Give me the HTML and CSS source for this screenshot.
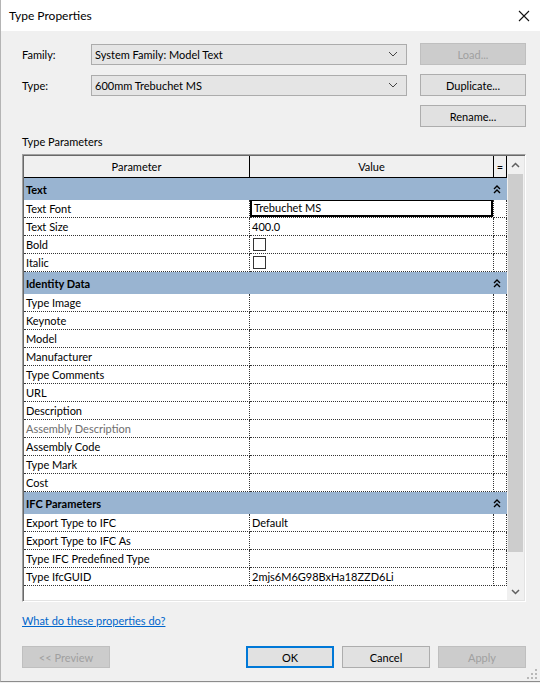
FILE: index.html
```html
<!DOCTYPE html>
<html lang="en">
<head>
    <meta charset="UTF-8">
    <title>Type Properties</title>
    <link rel="stylesheet" href="styles.css">
</head>
<body>
    <div class="dialog">
        <div class="titlebar">
            <span class="title">Type Properties</span>
            <svg class="close" width="12" height="12" viewBox="0 0 12 12">
                <path d="M1 1 L11 11 M11 1 L1 11" stroke="#111" stroke-width="1.1" fill="none"/>
            </svg>
        </div>

        <div class="content">
            <div class="type-form">
                <label>Family:</label>
                <div class="combo">
                    <span>System Family: Model Text</span>
                    <svg width="10" height="6" viewBox="0 0 10 6"><path d="M1 1 L5 5 L9 1" stroke="#444" stroke-width="1" fill="none"/></svg>
                </div>
                <button class="btn" disabled>Load...</button>

                <label>Type:</label>
                <div class="combo">
                    <span>600mm Trebuchet MS</span>
                    <svg width="10" height="6" viewBox="0 0 10 6"><path d="M1 1 L5 5 L9 1" stroke="#444" stroke-width="1" fill="none"/></svg>
                </div>
                <button class="btn">Duplicate...</button>

                <button class="btn rename">Rename...</button>
            </div>

            <div class="section-label">Type Parameters</div>

            <div class="prop-grid">
                <div class="prop-table">
                    <div class="head">
                        <div>Parameter</div>
                        <div>Value</div>
                        <div>=</div>
                    </div>

                    <div class="group">
                        <span>Text</span>
                        <svg class="fold" width="8" height="9" viewBox="0 0 8 9"><path d="M1 4 L4 1 L7 4 M1 8 L4 5 L7 8" stroke="#000" stroke-width="1.4" fill="none"/></svg>
                    </div>
                    <div class="row"><div>Text Font</div><div class="val"><span class="edit">Trebuchet MS</span></div><div></div></div>
                    <div class="row"><div>Text Size</div><div class="val">400.0</div><div></div></div>
                    <div class="row"><div>Bold</div><div class="val"><span class="check"></span></div><div></div></div>
                    <div class="row"><div>Italic</div><div class="val"><span class="check"></span></div><div></div></div>

                    <div class="group">
                        <span>Identity Data</span>
                        <svg class="fold" width="8" height="9" viewBox="0 0 8 9"><path d="M1 4 L4 1 L7 4 M1 8 L4 5 L7 8" stroke="#000" stroke-width="1.4" fill="none"/></svg>
                    </div>
                    <div class="row"><div>Type Image</div><div class="val"></div><div></div></div>
                    <div class="row"><div>Keynote</div><div class="val"></div><div></div></div>
                    <div class="row"><div>Model</div><div class="val"></div><div></div></div>
                    <div class="row"><div>Manufacturer</div><div class="val"></div><div></div></div>
                    <div class="row"><div>Type Comments</div><div class="val"></div><div></div></div>
                    <div class="row"><div>URL</div><div class="val"></div><div></div></div>
                    <div class="row"><div>Description</div><div class="val"></div><div></div></div>
                    <div class="row"><div class="muted">Assembly Description</div><div class="val"></div><div></div></div>
                    <div class="row"><div>Assembly Code</div><div class="val"></div><div></div></div>
                    <div class="row"><div>Type Mark</div><div class="val"></div><div></div></div>
                    <div class="row"><div>Cost</div><div class="val"></div><div></div></div>

                    <div class="group">
                        <span>IFC Parameters</span>
                        <svg class="fold" width="8" height="9" viewBox="0 0 8 9"><path d="M1 4 L4 1 L7 4 M1 8 L4 5 L7 8" stroke="#000" stroke-width="1.4" fill="none"/></svg>
                    </div>
                    <div class="row"><div>Export Type to IFC</div><div class="val">Default</div><div></div></div>
                    <div class="row"><div>Export Type to IFC As</div><div class="val"></div><div></div></div>
                    <div class="row"><div>Type IFC Predefined Type</div><div class="val"></div><div></div></div>
                    <div class="row"><div>Type IfcGUID</div><div class="val">2mjs6M6G98BxHa18ZZD6Li</div><div></div></div>
                </div>

                <div class="scrollbar">
                    <div class="arrow">
                        <svg width="9" height="6" viewBox="0 0 9 6"><path d="M1 5 L4.5 1.5 L8 5" stroke="#606060" stroke-width="1.5" fill="none"/></svg>
                    </div>
                    <div class="track"><div class="thumb"></div></div>
                    <div class="arrow">
                        <svg width="9" height="6" viewBox="0 0 9 6"><path d="M1 1 L4.5 4.5 L8 1" stroke="#606060" stroke-width="1.5" fill="none"/></svg>
                    </div>
                </div>
            </div>

            <a class="help" href="#">What do these properties do?</a>

            <div class="actions">
                <button class="btn" disabled>&lt;&lt; Preview</button>
                <div class="spacer"></div>
                <button class="btn default">OK</button>
                <button class="btn">Cancel</button>
                <button class="btn" disabled>Apply</button>
            </div>
        </div>

        <svg class="grip" width="12" height="12" viewBox="0 0 12 12">
            <rect x="9" y="1" width="2" height="2" fill="#b8b8b8"/>
            <rect x="9" y="5" width="2" height="2" fill="#b8b8b8"/>
            <rect x="5" y="5" width="2" height="2" fill="#b8b8b8"/>
            <rect x="9" y="9" width="2" height="2" fill="#b8b8b8"/>
            <rect x="5" y="9" width="2" height="2" fill="#b8b8b8"/>
            <rect x="1" y="9" width="2" height="2" fill="#b8b8b8"/>
        </svg>
    </div>
</body>
</html>
```

FILE: styles.css
```css
* {
    margin: 0;
    padding: 0;
    box-sizing: border-box;
}

body {
    font-family: Lato, 'Open Sans', sans-serif;
    font-size: 11px;
    color: #000;
    background: #f0f0f0;
    width: 540px;
    height: 683px;
    overflow: hidden;
}

.dialog {
    position: relative;
    width: 540px;
    height: 682px;
    background: #f0f0f0;
    border-left: 1px solid #b4b4b4;
    border-bottom: 1px solid #8c8c8c;
}

.titlebar {
    height: 31px;
    background: #fff;
    display: flex;
    align-items: center;
    justify-content: space-between;
    padding: 0 10px 0 8px;
}

.title {
    font-size: 12px;
}

.content {
    padding: 12px 0 0 21px;
}

/* family / type selectors */
.type-form {
    display: grid;
    grid-template-columns: 56px 316px 106px;
    grid-auto-rows: 22px;
    column-gap: 13px;
    row-gap: 9px;
    align-items: center;
}

.combo {
    height: 21px;
    background: #e5e5e5;
    border: 1px solid #acacac;
    display: flex;
    align-items: center;
    justify-content: space-between;
    padding: 0 8px 0 3px;
}

.btn {
    font-family: inherit;
    font-size: 11px;
    height: 22px;
    background: #e1e1e1;
    border: 1px solid #adadad;
    color: #000;
}

.btn:disabled {
    background: #cccccc;
    border-color: #bfbfbf;
    color: #a0a0a0;
}

.rename {
    grid-column: 3;
}

.section-label {
    margin-top: 7px;
    line-height: 16px;
}

/* property grid */
.prop-grid {
    margin-top: 4px;
    width: 504px;
    height: 448px;
    display: flex;
    border-top: 1px solid #a0a0a0;
    border-left: 1px solid #a0a0a0;
    border-right: 1px solid #fff;
    border-bottom: 1px solid #fff;
    box-shadow: inset 1px 1px 0 #696969, inset -1px -1px 0 #e3e3e3;
    padding: 1px;
    background: #fff;
}

.prop-table {
    width: 483px;
}

.head,
.row {
    display: grid;
    grid-template-columns: 226px 244px 13px;
}

.head {
    height: 22px;
    background: #f0f0f0;
    border-bottom: 1px solid #000;
}

.head div {
    text-align: center;
    line-height: 21px;
    border-right: 1px solid #000;
}

.group {
    height: 22px;
    background: #99b4d1;
    font-weight: 700;
    display: flex;
    align-items: center;
    justify-content: space-between;
    padding: 0 6px 0 2px;
}

.fold {
    margin-top: 1px;
}

.row {
    height: 18px;
    line-height: 17px;
}

.row > div {
    border-bottom: 1px dotted #333;
    border-right: 1px dotted #333;
    padding-left: 2px;
    white-space: nowrap;
    overflow: hidden;
}

.muted {
    color: #6d6d6d;
}

.edit {
    display: block;
    height: 18px;
    margin: -1px 0 0 -2px;
    padding-left: 2px;
    border: 2px solid #000;
    line-height: 13px;
}

.check {
    display: inline-block;
    width: 13px;
    height: 13px;
    margin: 2px 0 0 1px;
    border: 1px solid #333;
    background: #fff;
    vertical-align: top;
}

.scrollbar {
    width: 17px;
    display: flex;
    flex-direction: column;
    background: #f0f0f0;
}

.arrow {
    height: 17px;
    display: flex;
    align-items: center;
    justify-content: center;
}

.track {
    flex: 1;
    padding: 1px 1px 0;
}

.thumb {
    height: 378px;
    background: #cdcdcd;
}

.help {
    display: block;
    width: max-content;
    margin-top: 11px;
    line-height: 16px;
    color: #0066cc;
    text-decoration: underline;
}

.actions {
    display: flex;
    width: 504px;
    margin-top: 17px;
    gap: 8px;
}

.actions .btn {
    width: 88px;
}

.spacer {
    flex: 1;
}

.btn.default {
    border: 2px solid #0078d7;
}

.grip {
    position: absolute;
    right: 2px;
    bottom: 1px;
}
```
